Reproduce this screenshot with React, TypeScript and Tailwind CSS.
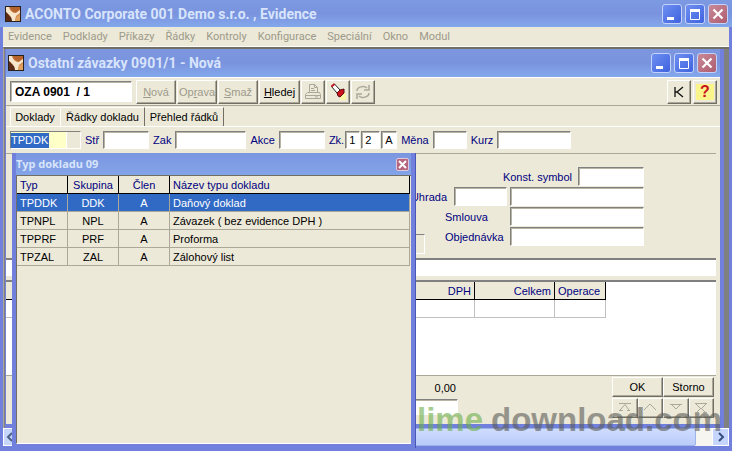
import React from "react";
import clsx from "clsx";

const menu = ["Evidence", "Podklady", "Příkazy", "Řádky", "Kontroly", "Konfigurace", "Speciální", "Okno", "Modul"];

const docTypes = [
  { typ: "TPDDK", group: "DDK", clen: "A", name: "Daňový doklad" },
  { typ: "TPNPL", group: "NPL", clen: "A", name: "Závazek ( bez evidence DPH )" },
  { typ: "TPPRF", group: "PRF", clen: "A", name: "Proforma" },
  { typ: "TPZAL", group: "ZAL", clen: "A", name: "Zálohový list" },
];

const sunken =
  "border border-t-[#808080] border-l-[#808080] border-r-white border-b-white shadow-[inset_1px_1px_0_#b8b4a4] bg-white rounded-none outline-none";
const raised =
  "border border-t-white border-l-white border-r-[#716f64] border-b-[#716f64] shadow-[inset_-1px_-1px_0_#aca899] bg-[#ece9d8] flex items-center justify-center";

function AppIcon() {
  return (
    <svg width="16" height="16" viewBox="0 0 16 16" className="shrink-0">
      <rect width="16" height="16" fill="#2a211d" />
      <rect x="1" y="1" width="14" height="14" fill="#c9793f" />
      <path d="M1 5c2 4 4 5 6 7v3H1z" fill="#5a2c18" />
      <path d="M1 1h3c1 4 4 6 7 6l4-3v3l-4 3-1 5H7C7 11 4 8 1 6z" fill="#f6e6cc" />
      <path d="M5 1h10v2l-4 3C8 6 6 4 5 1z" fill="#b5632c" />
      <path d="M11 11l4-3v7h-5z" fill="#e0a060" />
    </svg>
  );
}

function WindowButtons() {
  const base = "w-5 h-5 rounded-[3px] border border-[#c3d3fb] flex items-center justify-center";
  return (
    <div className="flex gap-[3px] ml-auto">
      <button aria-label="Minimize" className={clsx(base, "bg-linear-to-br from-[#6f8ff0] to-[#3f62e0]")}>
        <svg width="16" height="16"><rect x="3" y="11" width="7" height="3" fill="#fff" /></svg>
      </button>
      <button aria-label="Maximize" className={clsx(base, "bg-linear-to-br from-[#6f8ff0] to-[#3f62e0]")}>
        <svg width="16" height="16"><path d="M3.500 4v9.500h9V4" fill="none" stroke="#fff" /><rect x="3" y="3" width="10" height="3" fill="#fff" /></svg>
      </button>
      <button aria-label="Close" className={clsx(base, "bg-linear-to-br from-[#c98a98] to-[#ae5c70]")}>
        <svg width="16" height="16"><path d="M3.500 3.500l9 9M12.500 3.500l-9 9" stroke="#fff" strokeWidth="2.200" /></svg>
      </button>
    </div>
  );
}

function Field({ id, label, className }: { id: string; label: string; className: string }) {
  return (
    <div className="flex items-center gap-1">
      <label htmlFor={id} className="text-[#000080]">{label}</label>
      <input id={id} className={clsx(sunken, "h-[18px] px-1 text-black", className)} />
    </div>
  );
}

function Toolbar() {
  return (
    <div className="flex items-center h-[29px] pl-1 pr-[3px] border-t border-t-white border-b border-b-[#aca899]">
      <input
        aria-label="Doklad"
        defaultValue="OZA 0901  / 1"
        className={clsx(sunken, "w-[122px] h-[21px] px-1 mr-1 font-bold text-xs")}
      />
      <div className="flex gap-px">
        <button className={clsx(raised, "w-10 h-6 text-[#9d9a8b]")}><span><u>N</u>ová</span></button>
        <button className={clsx(raised, "w-10 h-6 text-[#9d9a8b]")}><span>Op<u>r</u>ava</span></button>
        <button className={clsx(raised, "w-10 h-6 text-[#9d9a8b]")}><span><u>S</u>maž</span></button>
        <button className={clsx(raised, "w-[41px] h-6 text-black")}><span><u>H</u>ledej</span></button>
        <button aria-label="Tisk" className={clsx(raised, "w-6 h-6")}>
          <svg width="18" height="18" fill="none" stroke="#aca899">
            <path d="M5.500 9V1.500h5l3 3V9M10.500 1.500v3h3M7 5.500h3M7 7.500h4M3.500 9.500h12l1 2v4h-15v-4zM1.500 12.500h15M11 14h3" />
          </svg>
        </button>
        <button aria-label="Filtr" className={clsx(raised, "w-6 h-6")}>
          <svg width="18" height="18">
            <path d="M11 10h6v7h-6z" fill="#fbf7a8" />
            <path d="M2.500 3.500l3-2.500 5.500 6-3 3z" fill="#fff" stroke="#222" />
            <path d="M2.500 3.500l3-2.500" stroke="#c8141e" strokeWidth="2" />
            <path d="M8 10l3-3 4-1v4l-4 4-2-1z" fill="#d0141e" stroke="#5c0a10" />
          </svg>
        </button>
        <button aria-label="Obnovit" className={clsx(raised, "w-6 h-6")}>
          <svg width="18" height="18" fill="none" stroke="#aca899" strokeWidth="1.500">
            <path d="M3 8c0-4 7-6 10-3M15 2v5h-5M15 10c0 4-7 6-10 3M3 16v-5h5" />
          </svg>
        </button>
      </div>
      <div className="flex gap-0.5 ml-auto">
        <button aria-label="Kalkulačka" className={clsx(raised, "w-6 h-6")}>
          <svg width="12" height="12" fill="none" stroke="#111" strokeWidth="1.300"><path d="M2 1v10M10 1L4 6l6 5M2 6h2" /></svg>
        </button>
        <button className={clsx(raised, "w-6 h-6 text-base font-bold text-[#c8141e]")}>
          <span className="bg-[#fbf58c] px-1 leading-4">?</span>
        </button>
      </div>
    </div>
  );
}

function Tabs() {
  const tab = "h-[19px] px-1 border-r border-r-[#716f64] border-t border-t-white whitespace-nowrap";
  return (
    <div className="flex items-end h-[21px] px-1 border-b border-b-white">
      <button className={clsx(tab, "w-[50px] border-r-transparent border-l border-l-white")}>Doklady</button>
      <button className={clsx(tab, "w-[85px] h-5 leading-none border-l border-l-white")}>Řádky dokladu</button>
      <button className={clsx(tab, "w-[79px]")}>Přehled řádků</button>
    </div>
  );
}

function FieldRow() {
  return (
    <div className="flex items-center gap-1 h-[26px] px-1">
      <div className="flex w-[71px] h-[18px] border border-t-[#808080] border-l-[#808080] border-r-white border-b-white">
        <div className="w-[55px] bg-[#ffffc8] flex items-center">
          <input
            aria-label="Typ dokladu"
            defaultValue="TPDDK"
            className="w-[38px] h-[15px] bg-[#316ac5] text-white outline-none"
          />
        </div>
        <button aria-label="Vybrat typ" className="flex-1 border-l border-l-white bg-[#ece9d8]" />
      </div>
      <Field id="str" label="Stř" className="w-[46px]" />
      <Field id="zak" label="Zak" className="w-[71px]" />
      <Field id="akce" label="Akce" className="w-[46px]" />
      <div className="flex items-center gap-px">
        <label htmlFor="zk1" className="text-[#000080]">Zk.</label>
        <input id="zk1" defaultValue="1" className={clsx(sunken, "w-[15px] h-[18px] px-[3px]")} />
        <input aria-label="Zk. 2" defaultValue="2" className={clsx(sunken, "w-[19px] h-[18px] px-[3px]")} />
        <input aria-label="Zk. 3" defaultValue="A" className={clsx(sunken, "w-4 h-[18px] px-[3px]")} />
      </div>
      <Field id="mena" label="Měna" className="w-[34px]" />
      <Field id="kurz" label="Kurz" className="w-[74px]" />
    </div>
  );
}

function Details() {
  const input = clsx(sunken, "h-[19px] px-1");
  return (
    <div className="flex items-end justify-end h-[105px] pr-[72px] pb-3 border-t border-t-[#aca899] mr-1">
      <div className="flex items-end flex-1 justify-end mr-5 -mb-2">
        <input aria-label="Poznámka" readOnly className="w-40 h-5 bg-[#ece9d8] border border-t-[#808080] border-white outline-none" />
      </div>
      <div className="flex flex-col gap-px text-[#000080] w-[199px]">
        <div className="flex items-center justify-end gap-1.5">
          <label htmlFor="konst">Konst. symbol</label>
          <input id="konst" className={clsx(input, "w-[66px]")} />
        </div>
        <div className="flex items-center justify-end gap-[3px]">
          <label htmlFor="uhrada" className="mr-1">Uhrada</label>
          <input id="uhrada" className={clsx(input, "w-[53px]")} />
          <input aria-label="Uhrada název" className={clsx(input, "w-[134px] shrink-0")} />
        </div>
        <div className="flex items-center justify-between">
          <label htmlFor="smlouva">Smlouva</label>
          <input id="smlouva" className={clsx(input, "w-[134px]")} />
        </div>
        <div className="flex items-center justify-between">
          <label htmlFor="objednavka">Objednávka</label>
          <input id="objednavka" className={clsx(input, "w-[134px]")} />
        </div>
      </div>
    </div>
  );
}

function ItemsGrid() {
  const th = "border-r border-b border-black bg-[#ece9d8] font-normal text-[#000080] h-[18px] px-[3px]";
  const td = "border-r border-b border-[#c0c0c0] h-[18px]";
  return (
    <div className="flex-1 bg-white border-t-2 border-t-[#808080] mt-1 mr-1">
      <table className="table-fixed w-[600px] border-separate border-spacing-0">
        <thead>
          <tr>
            <th className={th}></th>
            <th className={clsx(th, "w-[60px] text-right")}>DPH</th>
            <th className={clsx(th, "w-20 text-right")}>Celkem</th>
            <th className={clsx(th, "w-[51px] text-left")}>Operace</th>
          </tr>
        </thead>
        <tbody>
          <tr>
            <td className={td}></td>
            <td className={td}></td>
            <td className={td}></td>
            <td className={td}></td>
          </tr>
        </tbody>
      </table>
    </div>
  );
}

function Footer() {
  const icons = [
    { label: "První", d: "M2 3.500h12M8 4.500L3 10M8 4.500l4 5.500M2 10.500h4M10 10.500h3" },
    { label: "Předchozí", d: "M2 10l6-6 6 6" },
    { label: "Další", d: "M2 4.500h12M4 5l4 4 4-4" },
    { label: "Poslední", d: "M2 3.500h12M3 4l5 5 5-5M2 12.500h4M10 12.500h4M4 12l4-4 4 4" },
  ];
  return (
    <div className="flex h-[49px] pt-px pr-0.5 mr-1 border-t border-t-[#aca899]">
      <div className="flex flex-col items-end w-[452px]">
        <span className="h-[22px] leading-[22px] pr-0.5">0,00</span>
        <input aria-label="Celkem" className={clsx(sunken, "w-40 h-4")} />
      </div>
      <div className="ml-auto w-[102px]">
        <div className="grid grid-cols-2">
          <button className={clsx(raised, "h-5")}>OK</button>
          <button className={clsx(raised, "h-5")}>Storno</button>
        </div>
        <div className="grid grid-cols-4 mt-px">
          {icons.map((icon) => (
            <button key={icon.label} aria-label={icon.label} className={clsx(raised, "h-5")}>
              <svg width="16" height="16" fill="none" stroke="#aca899"><path d={icon.d} /></svg>
            </button>
          ))}
        </div>
      </div>
    </div>
  );
}

function TypeDialog() {
  const th = "border-r border-b border-black bg-[#ece9d8] font-normal text-[#000080] h-[18px]";
  return (
    <div className="absolute left-3 top-[153px] bottom-[3px] w-[404px] flex flex-col bg-[#7080dc] px-1 pb-1 border-r border-r-[#4a55b8]">
      <div className="flex items-center h-[22px] bg-linear-to-b from-[#7a96df] to-[#83a4e8] text-[#d8e4fb]">
        <h2 className="font-['Noto_Sans'] font-bold text-[11px]">Typ dokladu 09</h2>
        <button aria-label="Zavřít" className="ml-auto mr-0.5 w-[13px] h-[13px] rounded-[2px] border border-[#e0c8e0] bg-[#b5657c] flex items-center justify-center">
          <svg width="9" height="9"><path d="M1 1l7 7M8 1L1 8" stroke="#fff" strokeWidth="2" /></svg>
        </button>
      </div>
      <div className="flex-1 bg-[#ece9d8] border-t border-l border-[#716f64] border-b border-b-white pr-px">
        <table className="table-fixed w-full border-separate border-spacing-0">
          <thead>
            <tr>
              <th className={clsx(th, "w-[51px] text-left pl-[3px]")}>Typ</th>
              <th className={clsx(th, "w-[51px]")}>Skupina</th>
              <th className={clsx(th, "w-[51px]")}>Člen</th>
              <th className={clsx(th, "text-left pl-[3px]")}>Název typu dokladu</th>
            </tr>
          </thead>
          <tbody>
            {docTypes.map((row, i) => (
              <tr
                key={row.typ}
                className={clsx(
                  "[&>td]:h-[18px] [&>td]:border-r [&>td]:border-b [&>td]:border-[#aca899]",
                  i === 0 ? "bg-[#316ac5] text-white" : "text-black"
                )}
              >
                <td className="pl-[3px]">{row.typ}</td>
                <td className="text-center">{row.group}</td>
                <td className="text-center">{row.clen}</td>
                <td className="pl-[3px]">{row.name}</td>
              </tr>
            ))}
          </tbody>
        </table>
      </div>
    </div>
  );
}

export default function App() {
  return (
    <div className="relative h-screen min-h-[451px] flex flex-col overflow-hidden bg-[#7080dc] font-['Liberation_Sans',sans-serif] text-[11px] leading-4 text-black">
      <header className="flex items-center h-[27px] pl-[5px] pr-1 gap-1 bg-linear-to-b from-[#7c9ae2] via-[#7a93de] to-[#84a8ec]">
        <AppIcon />
        <h1 className="font-['Roboto'] font-bold text-sm text-[#d8e4fb]">ACONTO Corporate 001 Demo s.r.o. , Evidence</h1>
        <WindowButtons />
      </header>

      <div className="flex-1 min-h-0 flex flex-col mx-[3px] mb-[5px] bg-[#ece9d8]">
        <nav className="flex items-center gap-[11px] h-5 px-[5px] font-['Roboto'] text-[#9d9a8b] border-b border-b-white">
          {menu.map((item) => (
            <a key={item} href="#">{item}</a>
          ))}
        </nav>

        <main className="flex-1 min-h-0 flex bg-[#808080] border-t-2 border-l border-t-[#716f64] border-l-[#aca899] pl-px pr-[5px]">
          <div className="flex-1 flex flex-col bg-[#7080dc] pr-1 pl-px">
            <div className="flex items-center h-7 pl-0.5 pr-[3px] gap-1 bg-linear-to-b from-[#7c96df] via-[#7a93de] to-[#84a8ec]">
              <AppIcon />
              <h2 className="font-['Roboto'] font-bold text-sm text-[#d8e4fb]">Ostatní závazky 0901/1 - Nová</h2>
              <WindowButtons />
            </div>
            <div className="flex-1 flex flex-col bg-[#ece9d8] mb-1">
              <Toolbar />
              <Tabs />
              <FieldRow />
              <Details />
              <div className="h-[18px] bg-white border-t-2 border-t-[#808080] mr-1" />
              <ItemsGrid />
              <Footer />
            </div>
          </div>
        </main>

        <div className="flex h-[18px] bg-[#f6f5f0]">
          <button aria-label="Doleva" className="w-[18px] bg-[#c6d5fc] border border-white flex items-center">
            <svg width="12" height="12"><path d="M8 2L4 6l4 4" fill="none" stroke="#4d6185" strokeWidth="2" /></svg>
          </button>
          <div className="flex-1 mr-4 rounded-[2px] border border-[#9db4e8] bg-linear-to-b from-[#cfdcfe] to-[#b9cbfa]" />
          <button aria-label="Doprava" className="w-[17px] bg-[#c6d5fc] border border-white flex items-center justify-center">
            <svg width="10" height="12"><path d="M3 2l4 4-4 4" fill="none" stroke="#35507f" strokeWidth="2" /></svg>
          </button>
        </div>
      </div>

      <p className="absolute left-[417px] bottom-[13px] flex gap-2 text-[33px] leading-9 font-bold opacity-60 pointer-events-none whitespace-nowrap">
        <span className="text-[#6cae4a]">lime</span>
        <span className="text-[#5c5c58]">download.com</span>
      </p>

      <TypeDialog />
    </div>
  );
}
